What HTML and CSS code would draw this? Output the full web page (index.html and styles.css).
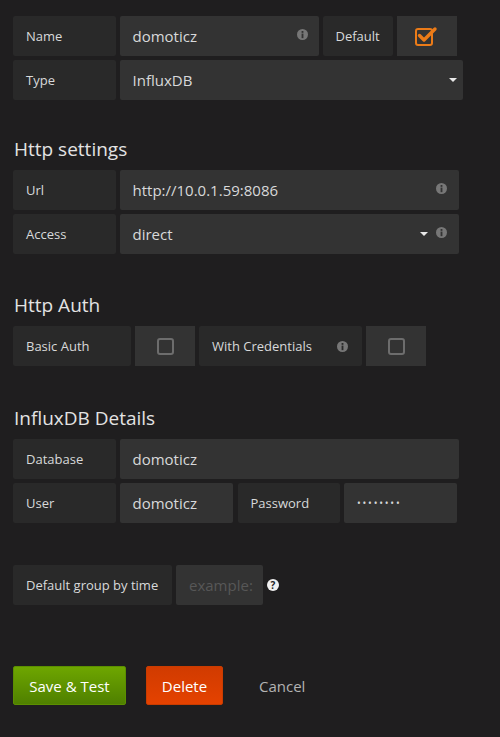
FILE: index.html
```html
<!DOCTYPE html>
<html>
<head>
<meta charset="utf-8">
<link rel="stylesheet" href="styles.css">
</head>
<body>
<div class="page">
  <div class="group">
    <div class="row">
      <div class="label w-102">Name</div>
      <div class="input w-199">domoticz<span class="info pos-r"><svg width="11" height="11" viewBox="0 0 12 12"><circle cx="6" cy="6" r="6" fill="#777"/><rect x="5" y="2.2" width="2" height="2" fill="#333"/><rect x="5" y="5" width="2" height="5" fill="#333"/></svg></span></div>
      <div class="label w-70">Default</div>
      <div class="cell w-60">
        <svg width="24" height="22" viewBox="0 0 24 22"><rect x="1" y="4" width="16" height="16" rx="2" fill="none" stroke="#eb7b18" stroke-width="2"/><path d="M4.5 10.5 L9 15 L20 4" fill="none" stroke="#eb7b18" stroke-width="3.4" stroke-linecap="round" stroke-linejoin="round"/></svg>
      </div>
    </div>
    <div class="row">
      <div class="label w-102">Type</div>
      <div class="input w-344">InfluxDB<span class="caret caret-end"></span></div>
    </div>
  </div>

  <h3 class="heading mt-a">Http settings</h3>
  <div class="group">
    <div class="row">
      <div class="label w-102">Url</div>
      <div class="input w-340">http://10.0.1.59:8086<span class="info pos-r2"><svg width="11" height="11" viewBox="0 0 12 12"><circle cx="6" cy="6" r="6" fill="#777"/><rect x="5" y="2.2" width="2" height="2" fill="#333"/><rect x="5" y="5" width="2" height="5" fill="#333"/></svg></span></div>
    </div>
    <div class="row">
      <div class="label w-102">Access</div>
      <div class="input w-340">direct<span class="caret pos-r3"></span><span class="info pos-r2"><svg width="11" height="11" viewBox="0 0 12 12"><circle cx="6" cy="6" r="6" fill="#777"/><rect x="5" y="2.2" width="2" height="2" fill="#333"/><rect x="5" y="5" width="2" height="5" fill="#333"/></svg></span></div>
    </div>
  </div>

  <h3 class="heading mt-b">Http Auth</h3>
  <div class="group">
    <div class="row">
      <div class="label w-118">Basic Auth</div>
      <div class="cell w-60"><span class="box"></span></div>
      <div class="label w-163 spread">With Credentials<svg width="11" height="11" viewBox="0 0 12 12"><circle cx="6" cy="6" r="6" fill="#777"/><rect x="5" y="2.2" width="2" height="2" fill="#292929"/><rect x="5" y="5" width="2" height="5" fill="#292929"/></svg></div>
      <div class="cell w-60"><span class="box"></span></div>
    </div>
  </div>

  <h3 class="heading mt-c">InfluxDB Details</h3>
  <div class="group">
    <div class="row">
      <div class="label w-102">Database</div>
      <div class="input w-340">domoticz</div>
    </div>
    <div class="row">
      <div class="label w-102">User</div>
      <div class="input w-113">domoticz</div>
      <div class="label w-102 ml-1">Password</div>
      <div class="input w-113"><span class="dots">••••••••</span></div>
    </div>
  </div>

  <div class="row mt-d">
    <div class="label w-159">Default group by time</div>
    <div class="input w-87 placeholder">example:</div>
    <span class="help"><svg width="12" height="12" viewBox="0 0 12 12"><circle cx="6" cy="6" r="6" fill="#f0f0f0"/><text x="6" y="9.6" text-anchor="middle" font-family="Open Sans, sans-serif" font-weight="700" font-size="10" fill="#1f1e1f">?</text></svg></span>
  </div>

  <div class="actions">
    <button class="btn btn-success">Save &amp; Test</button>
    <button class="btn btn-danger">Delete</button>
    <button class="btn btn-link">Cancel</button>
  </div>
</div>
</body>
</html>
```

FILE: styles.css
```css
html, body {
  margin: 0;
  padding: 0;
  background: #1f1e1f;
}
body {
  font-family: "Open Sans", "DejaVu Sans", sans-serif;
  color: #d8d9da;
}
.page {
  padding: 16px 13px 0 13px;
}
.group {
  display: flex;
  flex-direction: column;
  gap: 4px;
}
.row {
  display: flex;
  gap: 4px;
  height: 40px;
}
.label {
  background: #292929;
  border-radius: 2px;
  display: flex;
  align-items: center;
  padding: 0 13px;
  box-sizing: border-box;
  font-size: 13px;
  color: #d8d9da;
  white-space: nowrap;
}
.input {
  background: #333333;
  border-radius: 2px;
  display: flex;
  align-items: center;
  padding: 0 13px;
  box-sizing: border-box;
  font-size: 15px;
  color: #d8d9da;
  position: relative;
  white-space: nowrap;
}
.cell {
  background: #333333;
  display: flex;
  align-items: center;
  justify-content: center;
  box-sizing: border-box;
}
.w-60 { width: 60px; }
.w-70 { width: 70px; }
.w-87 { width: 87px; }
.w-102 { width: 102.5px; }
.w-113 { width: 113px; }
.w-118 { width: 118px; }
.w-159 { width: 159px; }
.w-163 { width: 163px; }
.w-199 { width: 199px; }
.w-340 { width: 339.5px; }
.w-344 { width: 343.5px; }
.ml-1 { margin-left: 1px; }
.spread { justify-content: space-between; padding-right: 14px; }
.spread svg { margin-top: 1px; }

.info {
  position: absolute;
  top: 50%;
  width: 11px;
  height: 11px;
  margin-top: -7px;
  line-height: 0;
}
.pos-r { right: 11px; }
.pos-r2 { right: 12px; }
.caret {
  position: absolute;
  top: 50%;
  margin-top: -2px;
  width: 0;
  height: 0;
  border-left: 4px solid transparent;
  border-right: 4px solid transparent;
  border-top: 4px solid #e9e9e9;
}
.caret-end { right: 6px; }
.pos-r3 { right: 31px; }

.box {
  width: 13px;
  height: 13px;
  border: 2px solid #6d6d6d;
  border-radius: 3px;
}
.dots {
  font-size: 10px;
  letter-spacing: 1.8px;
  color: #d8d9da;
}
.placeholder {
  color: #575757;
}
.help {
  display: flex;
  align-items: center;
}

.heading {
  margin: 0;
  font-size: 19px;
  font-weight: 400;
  line-height: 26px;
  color: #e3e3e3;
  padding-left: 1px;
  margin-bottom: 8px;
}
.mt-a { margin-top: 36px; }
.mt-b { margin-top: 38px; }
.mt-c { margin-top: 39px; }
.mt-d { margin-top: 42px; }

.actions {
  display: flex;
  gap: 20px;
  margin-top: 61px;
  height: 39px;
}
.btn {
  font-family: "Open Sans", "DejaVu Sans", sans-serif;
  font-size: 15px;
  padding: 0 14px;
  height: 39px;
  border-radius: 2px;
  cursor: pointer;
  box-sizing: border-box;
  white-space: nowrap;
}
.btn-success {
  width: 113px;
  color: #ffffff;
  background: linear-gradient(#6ea600, #4f8000);
  border: 1px solid #5b8f00;
}
.btn-danger {
  width: 77px;
  color: #ffffff;
  background: linear-gradient(#d13b00, #e44200);
  border: 1px solid #c93c00;
}
.btn-link {
  background: transparent;
  border: none;
  color: #b3b3b3;
  padding: 0 16px;
}
```
